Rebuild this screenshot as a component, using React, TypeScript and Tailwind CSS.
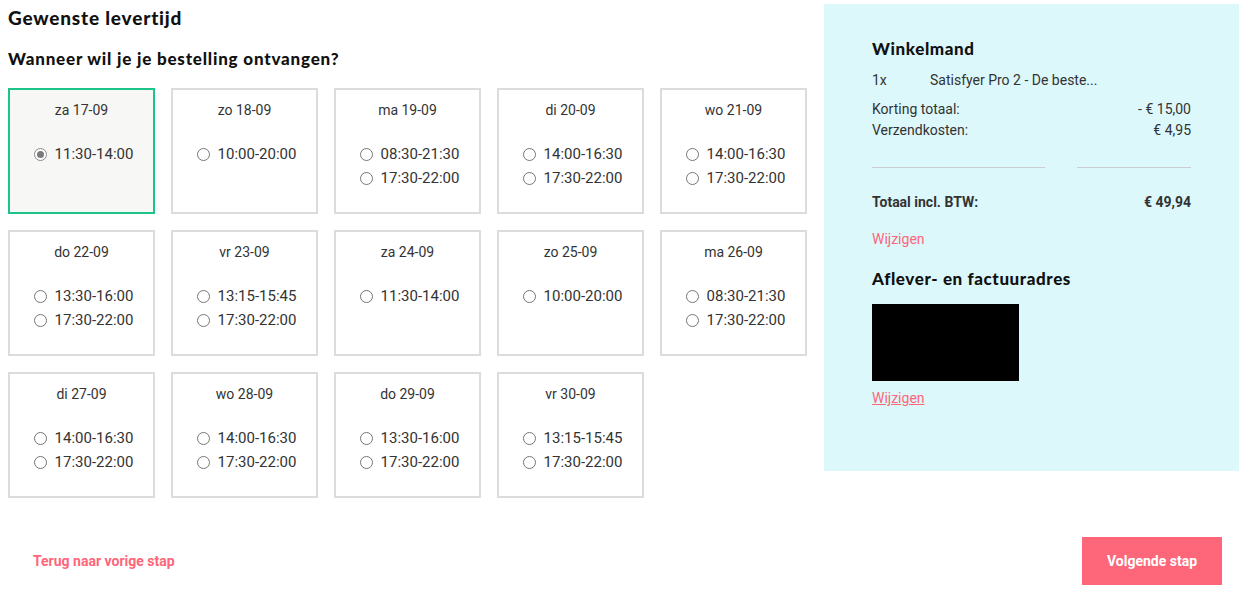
import React from "react";

const days: { d: string; t: string[]; sel?: boolean }[] = [
  { d: "za 17-09", t: ["11:30-14:00"], sel: true },
  { d: "zo 18-09", t: ["10:00-20:00"] },
  { d: "ma 19-09", t: ["08:30-21:30", "17:30-22:00"] },
  { d: "di 20-09", t: ["14:00-16:30", "17:30-22:00"] },
  { d: "wo 21-09", t: ["14:00-16:30", "17:30-22:00"] },
  { d: "do 22-09", t: ["13:30-16:00", "17:30-22:00"] },
  { d: "vr 23-09", t: ["13:15-15:45", "17:30-22:00"] },
  { d: "za 24-09", t: ["11:30-14:00"] },
  { d: "zo 25-09", t: ["10:00-20:00"] },
  { d: "ma 26-09", t: ["08:30-21:30", "17:30-22:00"] },
  { d: "di 27-09", t: ["14:00-16:30", "17:30-22:00"] },
  { d: "wo 28-09", t: ["14:00-16:30", "17:30-22:00"] },
  { d: "do 29-09", t: ["13:30-16:00", "17:30-22:00"] },
  { d: "vr 30-09", t: ["13:15-15:45", "17:30-22:00"] },
];

function Radio({ checked }: { checked?: boolean }) {
  return (
    <span
      className={
        "inline-flex w-[13px] h-[13px] rounded-full border bg-white items-center justify-center shrink-0 " +
        (checked ? "border-[#8a8a8a]" : "border-[#767676]")
      }
    >
      {checked && <span className="w-[7px] h-[7px] rounded-full bg-[#7a7a7a]" />}
    </span>
  );
}

export default function App() {
  return (
    <div className="w-[1246px] h-[595px] bg-white relative font-['Roboto',sans-serif] text-[#222]">
      <div className="flex">
        <div className="w-[824px] pl-2">
          <h1 className="font-['Lato',sans-serif] font-black text-[19px] leading-[22px] mt-[7px] text-[#111] tracking-[0.8px]">
            Gewenste levertijd
          </h1>
          <h2 className="font-['Lato',sans-serif] font-black text-[17px] leading-[22px] mt-[19px] text-[#111] tracking-[0.8px]">
            Wanneer wil je je bestelling ontvangen?
          </h2>
          <div className="grid grid-cols-[repeat(5,147px)] gap-4 mt-[18px]">
            {days.map((day) => (
              <div
                key={day.d}
                className={
                  "h-[126px] border-2 flex flex-col items-center pt-[11px] " +
                  (day.sel ? "border-[#1dc48a] bg-[#f7f7f5]" : "border-[#dcdcdc] bg-white")
                }
              >
                <div className="text-[14px] leading-[18px] text-[#333]">{day.d}</div>
                <div className="mt-[23px] flex flex-col pl-[4px]">
                  {day.t.map((t) => (
                    <div key={t} className="flex items-center gap-[8px] h-[24px] text-[15px] text-[#333]">
                      <Radio checked={day.sel} />
                      <span>{t}</span>
                    </div>
                  ))}
                </div>
              </div>
            ))}
          </div>
        </div>
        <div className="w-[415px] h-[467px] mt-[4px] bg-[#dcf8fb] px-12 pt-[34px]">
          <h3 className="font-['Lato',sans-serif] font-black text-[17px] leading-[22px] text-[#111] tracking-[0.6px]">
            Winkelmand
          </h3>
          <div className="flex text-[14px] text-[#333] mt-[10px] leading-[20px]">
            <span className="w-[58px]">1x</span>
            <span>Satisfyer Pro 2 - De beste...</span>
          </div>
          <div className="mt-[9px] text-[14px] text-[#333] leading-[21px]">
            <div className="flex justify-between">
              <span>Korting totaal:</span>
              <span>- € 15,00</span>
            </div>
            <div className="flex justify-between">
              <span>Verzendkosten:</span>
              <span>€ 4,95</span>
            </div>
          </div>
          <div className="flex justify-between mt-[26px]">
            <div className="w-[173px] h-px bg-[#c8cdd0]" />
            <div className="w-[114px] h-px bg-[#c8cdd0]" />
          </div>
          <div className="flex justify-between mt-[24px] text-[14px] font-bold text-[#333] leading-[20px]">
            <span>Totaal incl. BTW:</span>
            <span>€ 49,94</span>
          </div>
          <div className="mt-[17px] text-[14px] text-[#fe6679] leading-[20px]">Wijzigen</div>
          <h3 className="font-['Lato',sans-serif] font-black text-[17px] leading-[22px] text-[#111] mt-[19px] tracking-[0.6px]">
            Aflever- en factuuradres
          </h3>
          <div className="w-[147px] h-[77px] bg-black mt-[14px]" />
          <div className="mt-[7px] text-[14px] text-[#fe6679] underline leading-[20px]">Wijzigen</div>
        </div>
      </div>
      <div className="flex items-center justify-between mt-[39px] pl-[33px] pr-[24px]">
        <span className="text-[14px] font-bold text-[#fe6679]">Terug naar vorige stap</span>
        <div className="w-[140px] h-[48px] bg-[#fe6679] text-white text-[14px] font-bold flex items-center justify-center">
          Volgende stap
        </div>
      </div>
    </div>
  );
}
